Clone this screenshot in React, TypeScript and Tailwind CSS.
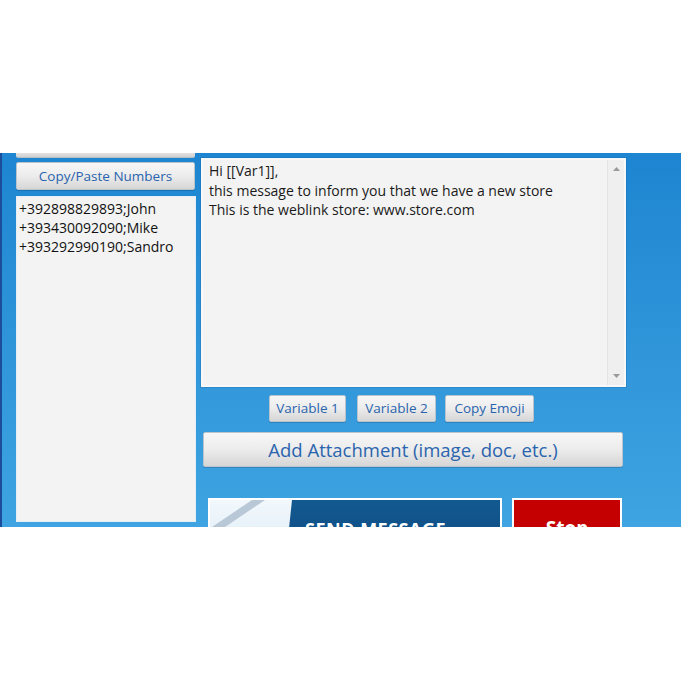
import React from "react";

const font = { fontFamily: '"Open Sans", "Noto Sans", Arial, sans-serif' };

function GrayBtn({ label, className }: { label: string; className: string }) {
  return (
    <div
      className={
        "shrink-0 flex items-center justify-center rounded-[2px] border border-[#b9c4cc] bg-gradient-to-b from-[#f7f7f7] via-[#ececec] to-[#d6d6d6] text-[#2a64ad] shadow-[0_1px_0_rgba(0,0,0,0.15)] " +
        className
      }
    >
      {label}
    </div>
  );
}

export default function App() {
  return (
    <div className="w-[681px] h-[681px] bg-white flex flex-col" style={font}>
      <div className="h-[153px] shrink-0" />
      <div className="h-[374px] shrink-0 overflow-hidden bg-gradient-to-b from-[#1d85d1] to-[#3fa4e1] border-l-[2px] border-[#1b4d9b] flex items-start">
        {/* left column */}
        <div className="ml-[14px] w-[179px] flex flex-col shrink-0">
          <div className="shrink-0 h-[5px] rounded-b-[2px] bg-gradient-to-b from-[#e2e2e2] to-[#d0d0d0] border-b border-[#b5c0c8]" />
          <GrayBtn label="Copy/Paste Numbers" className="mt-[4px] h-[28px] text-[13.5px]" />
          <div className="shrink-0 mt-[6px] h-[326px] w-[180px] bg-[#f3f3f3] border border-[#e6eef3] px-[2px] pt-[2px] text-[14px] leading-[19px] text-[#111]">
            <div>+392898829893;John</div>
            <div>+393430092090;Mike</div>
            <div>+393292990190;Sandro</div>
          </div>
        </div>
        {/* right column */}
        <div className="ml-[6px] w-[425px] flex flex-col shrink-0">
          <div className="shrink-0 mt-[5px] h-[229px] bg-[#f3f3f3] border-[2px] border-[#f8f8f8] flex shadow-[0_0_0_1px_rgba(20,90,160,0.25)]">
            <div className="flex-1 pl-[6px] pt-[1px] text-[14px] leading-[19.5px] text-[#1a1a1a]">
              <div>Hi [[Var1]],</div>
              <div>this message to inform you that we have a new store</div>
              <div>This is the weblink store: www.store.com</div>
            </div>
            <div className="w-[17px] bg-[#efefef] border-l border-[#e4e4e4] flex flex-col items-center justify-between py-[7px]">
              <svg width="7" height="4" viewBox="0 0 7 4">
                <path d="M0 4 L3.5 0 L7 4 Z" fill="#9a9a9a" />
              </svg>
              <svg width="7" height="4" viewBox="0 0 7 4">
                <path d="M0 0 L3.5 4 L7 0 Z" fill="#9a9a9a" />
              </svg>
            </div>
          </div>
          <div className="shrink-0 mt-[8px] ml-[68px] flex h-[27px]">
            <GrayBtn label="Variable 1" className="w-[77px] text-[13.5px]" />
            <GrayBtn label="Variable 2" className="ml-[11px] w-[79px] text-[13.5px]" />
            <GrayBtn label="Copy Emoji" className="ml-[9px] w-[89px] text-[13.5px]" />
          </div>
          <GrayBtn label="Add Attachment (image, doc, etc.)" className="mt-[10px] ml-[2px] w-[420px] h-[35px] text-[18.5px]" />
          <div className="shrink-0 mt-[31px] flex">
            <div className="ml-[7px] w-[294px] h-[60px] border-[2px] border-white relative overflow-hidden bg-gradient-to-b from-[#f2f8fc] to-[#dcebf5]">
              <div className="absolute left-[42px] top-0 w-[13px] h-[60px] bg-[#b8c8d6] skew-x-[-56deg] origin-top" />
              <div className="absolute left-[82px] top-0 w-[260px] h-[60px] bg-gradient-to-b from-[#13598f] to-[#0d4a85] skew-x-[-6deg] origin-top" />
              <div className="absolute left-[95px] top-[16px] text-white font-bold text-[18px] tracking-[0.5px]">
                SEND MESSAGE
              </div>
            </div>
            <div className="ml-[10px] w-[110px] h-[60px] border-[2px] border-white bg-[#c40000] flex justify-center pt-[14px] text-white font-bold text-[19px]">
              Stop
            </div>
          </div>
        </div>
      </div>
      <div className="flex-1 bg-white" />
    </div>
  );
}
